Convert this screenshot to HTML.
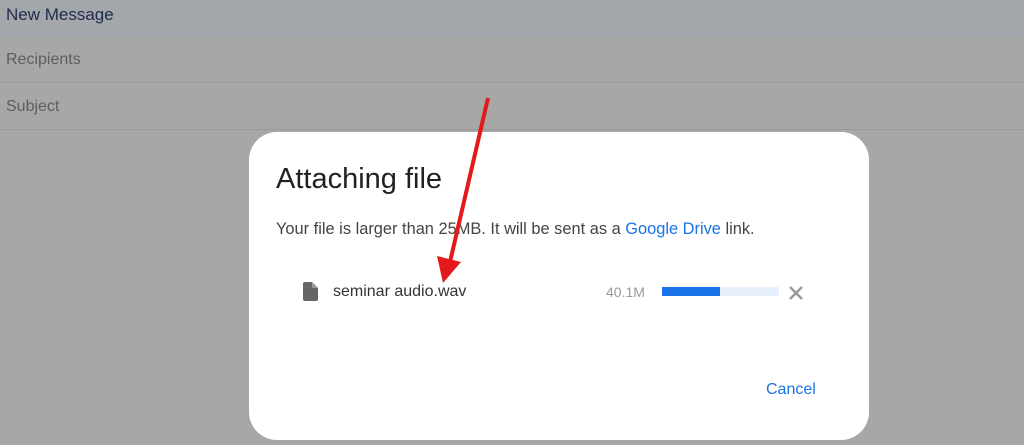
<!DOCTYPE html>
<html><head><meta charset="utf-8"><style>
body{margin:0;width:1024px;height:445px;overflow:hidden;background:#a7a7a7;font-family:"Liberation Sans",sans-serif;position:relative}
.hdr{position:absolute;left:0;top:0;width:1024px;height:37px;background:#a3a6ab;color:#1f2c4a;font-size:17px;line-height:30px;padding-left:6px;box-sizing:border-box}
.row{position:absolute;left:0;width:1024px;height:46px;border-bottom:1px solid #999;color:#5e5e5e;font-size:16px;line-height:46px;padding-left:6px;box-sizing:border-box}
.dlg{position:absolute;left:249px;top:132px;width:620px;height:308px;background:#fff;border-radius:28px}
.t{position:absolute;left:27px;top:31px;font-size:29px;color:#202124}
.p{position:absolute;left:27px;top:88px;font-size:16.4px;color:#444}
.p a{color:#1a73e8}
.fn{position:absolute;left:84px;top:151px;font-size:16px;color:#333}
.sz{position:absolute;left:357px;top:152px;font-size:14px;color:#999}
.bar{position:absolute;left:413px;top:155px;width:117px;height:9px;background:#e8f0fe}
.bar div{width:58px;height:9px;background:#1a73e8}
.cn{position:absolute;left:517px;top:249px;font-size:16px;color:#1a73e8}
</style></head><body>
<div class="hdr">New Message</div>
<div class="row" style="top:37px">Recipients</div>
<div class="row" style="top:84px">Subject</div>
<div class="dlg">
<div class="t">Attaching file</div>
<div class="p">Your file is larger than 25MB. It will be sent as a <a>Google Drive</a> link.</div>
<svg style="position:absolute;left:54px;top:150px" width="15" height="19" viewBox="0 0 15 19"><path d="M2 0h7l6 6v11a2 2 0 0 1-2 2H2a2 2 0 0 1-2-2V2a2 2 0 0 1 2-2z" fill="#666"/><path d="M9 0v6h6" fill="#999"/></svg>
<div class="fn">seminar audio.wav</div>
<div class="sz">40.1M</div>
<div class="bar"><div></div></div>
<svg style="position:absolute;left:539px;top:153px" width="16" height="16" viewBox="0 0 16 16"><path d="M2 2L14 14M14 2L2 14" stroke="#999" stroke-width="2.5"/></svg>
<div class="cn">Cancel</div>
</div>
<svg style="position:absolute;left:0;top:0" width="1024" height="445"><line x1="488" y1="98" x2="450" y2="262" stroke="#e3191c" stroke-width="4"/><polygon points="437,256 461,262 443,283" fill="#e3191c"/></svg>
</body></html>
